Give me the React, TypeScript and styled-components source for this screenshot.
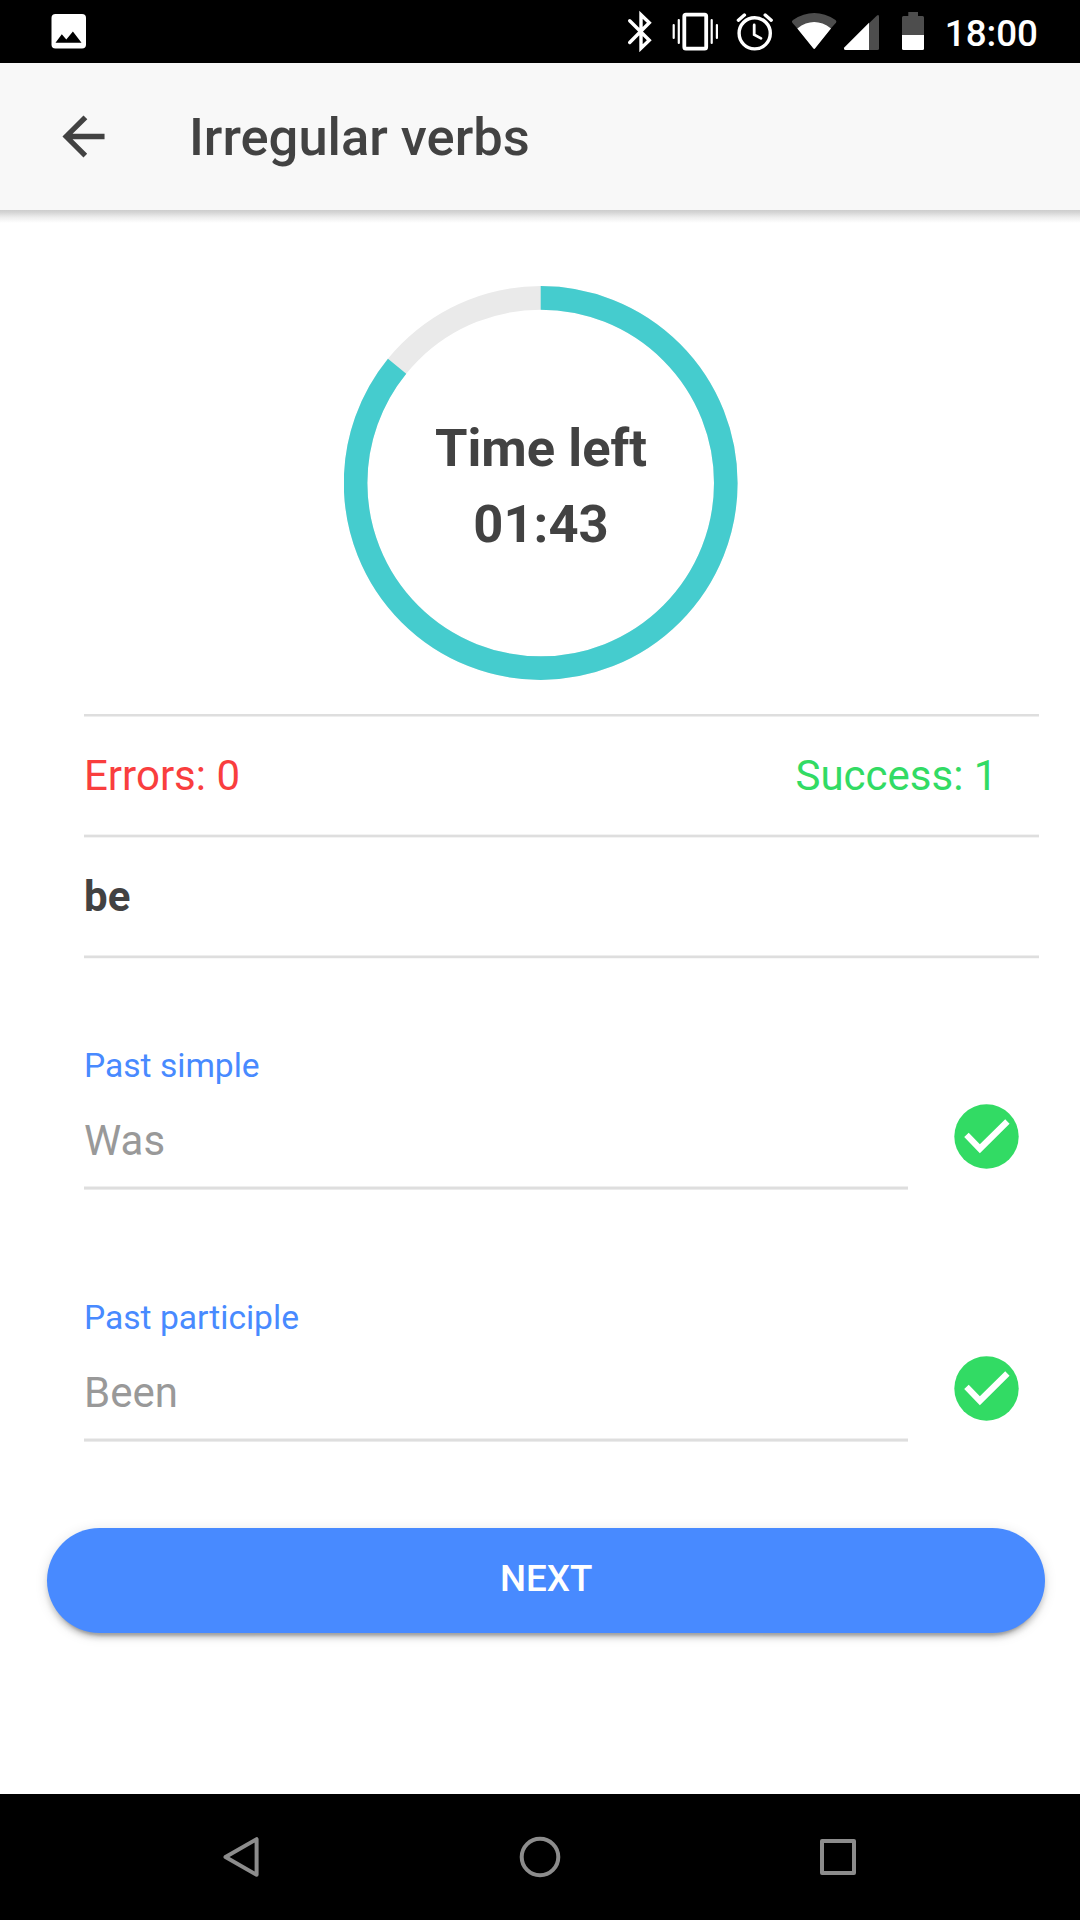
import React from "react";
import styled, { createGlobalStyle } from "styled-components";

const GlobalStyle = createGlobalStyle`
  * { box-sizing: border-box; }
  body {
    margin: 0;
    background: #fff;
    color: #424242;
    font-family: Roboto, "Liberation Sans", sans-serif;
  }
`;

const Screen = styled.div`
  width: 1080px;
  height: 1920px;
  display: flex;
  flex-direction: column;
  overflow: hidden;
  background: #fff;
`;

const StatusBar = styled.div`
  height: 63px;
  flex: none;
  display: flex;
  justify-content: space-between;
  padding: 0 42px 0 50.5px;
  background: #000;
  svg { display: block; flex: none; }
`;

const StatusIcons = styled.div`
  display: flex;
`;

const Clock = styled.div`
  width: 112px;
  text-align: right;
  color: #fff;
  font-size: 36.75px;
  font-weight: 500;
  line-height: 67px;
`;

const Header = styled.header`
  height: 147px;
  flex: none;
  display: flex;
  align-items: center;
  padding-left: 52px;
  background: #f8f8f8;
`;

const BackButton = styled.button`
  width: 63px;
  height: 63px;
  padding: 0;
  border: 0;
  background: none;
  svg { display: block; }
`;

const Title = styled.h1`
  margin: 0 0 0 74px;
  padding-top: 2px;
  font-size: 52.5px;
  font-weight: 500;
  line-height: 63px;
`;

const HeaderShadow = styled.div`
  height: 13px;
  flex: none;
  background: linear-gradient(#cdcdcd, #d6d6d6 20%, #ededed 55%, #fff);
`;

const Content = styled.main`
  flex: 1;
  display: flex;
  flex-direction: column;
`;

const TimerSection = styled.section`
  display: flex;
  justify-content: center;
  padding: 63px 0 33px 1px;
`;

const TimerRing = styled.div`
  display: grid;
  width: 394px;
  height: 394px;
  > * { grid-area: 1 / 1; }
`;

const TimerText = styled.div`
  align-self: center;
  text-align: center;
  font-size: 52.5px;
  font-weight: 700;
  line-height: 76px;
  padding-top: 5px;
  padding-left: 1px;
`;

const List = styled.section`
  padding: 0 40.6px 0 84px;
`;

const Divider = styled.div<{ $top: string; $bottom: string }>`
  height: 4px;
  border-top: 1px solid ${(p) => p.$top};
  border-bottom: 1px solid ${(p) => p.$bottom};
  background: #dedede;
`;

const Row = styled.div`
  height: 117px;
  display: flex;
  align-items: center;
  justify-content: space-between;
  padding-right: 42px;
  font-size: 42px;
  line-height: 50px;
`;

const Score = styled.span<{ $color: string }>`
  color: ${(p) => p.$color};
`;

const Verb = styled.strong`
  font-weight: 700;
`;

const Form = styled.form`
  display: flex;
  flex-direction: column;
  gap: 82px;
  padding: 61px 61.5px 0 84px;
`;

const Field = styled.div`
  height: 170px;
  display: flex;
  justify-content: space-between;
`;

const FieldBody = styled.div`
  width: 824.4px;
  display: flex;
  flex-direction: column;
`;

const Label = styled.label`
  padding-top: 26px;
  height: 91px;
  color: #488aff;
  font-size: 33.6px;
  line-height: 40px;
`;

const Value = styled.div`
  height: 75px;
  color: #999;
  font-size: 42px;
  line-height: 60px;
`;

const Check = styled.svg`
  width: 65px;
  height: 65px;
  margin-top: 83.5px;
  fill: #32db64;
`;

const NextButton = styled.button`
  height: 105px;
  margin: 85.5px 35px 0 47.3px;
  padding: 0 0 4px;
  border: 0;
  border-radius: 52.5px;
  background: #488aff;
  box-shadow: 0 5.25px 5.25px rgba(0, 0, 0, 0.14),
    0 7.9px 2.6px -5.25px rgba(0, 0, 0, 0.2),
    0 2.6px 13.1px rgba(0, 0, 0, 0.12);
  color: #fff;
  font-family: inherit;
  font-size: 36.75px;
  font-weight: 500;
  text-transform: uppercase;
`;

const NavBar = styled.nav`
  height: 126px;
  flex: none;
  display: flex;
  align-items: center;
  justify-content: space-between;
  padding: 0 220px;
  background: #000;
  svg { fill: none; stroke: #8c8c8c; stroke-width: 4; stroke-linejoin: round; }
`;

const RADIUS = 185.1;
const CIRCUMFERENCE = 2 * Math.PI * RADIUS;

function Timer({ left, total }: { left: number; total: number }) {
  const minutes = String(Math.floor(left / 60)).padStart(2, "0");
  const seconds = String(left % 60).padStart(2, "0");
  return (
    <TimerRing>
      <svg width="394" height="394" viewBox="0.3 0 394 394" fill="none" strokeWidth="23.6">
        <circle cx="197" cy="197" r={RADIUS} stroke="#eaeaea" />
        <circle
          cx="197"
          cy="197"
          r={RADIUS}
          stroke="#45ccce"
          strokeDasharray={`${(CIRCUMFERENCE * left) / total} ${CIRCUMFERENCE}`}
          transform="rotate(-90 197 197)"
        />
      </svg>
      <TimerText>
        Time left
        <br />
        {minutes}:{seconds}
      </TimerText>
    </TimerRing>
  );
}

function Answer({ label, value }: { label: string; value: string }) {
  return (
    <Field>
      <FieldBody>
        <Label>{label}</Label>
        <Value>{value}</Value>
        <Divider $top="#efefef" $bottom="#ebebeb" />
      </FieldBody>
      <Check viewBox="46 46 420 420">
        <circle cx="256" cy="256" r="208" />
        <path fill="#fff" d="M213 365L112 260l29-29 72 75 164-161 28 28z" />
      </Check>
    </Field>
  );
}

export default function App() {
  return (
    <>
      <GlobalStyle />
      <Screen>
        <StatusBar>
          <svg width="36" height="63" viewBox="51 0 36 63">
            <rect x="51.5" y="14" width="34.5" height="34.5" rx="4" fill="#fff" />
            <path d="M55.5 42.7L61.8 34.3 66.3 39.6 72.9 31.5 81.5 42.7z" />
          </svg>
          <StatusIcons>
            {/* Bluetooth */}
            <svg width="40" height="63" viewBox="626 0 40 63" fill="none" stroke="#fff" strokeWidth="3.4" strokeLinecap="round">
              <path d="M629.7 20.7L649.3 40.3 641 48.3V14.7L649.3 22.7 629.7 42.5" />
            </svg>
            {/* Vibration mode */}
            <svg width="66" height="63" viewBox="666 0 66 63" fill="none" stroke="#fff">
              <rect x="684.3" y="14.7" width="21.9" height="34" rx="1.6" strokeWidth="3.8" />
              <path strokeWidth="2.2" strokeLinecap="round" d="M673.7 25v13M678.8 20v23M711.7 20v23M716.9 25v13" />
            </svg>
            {/* Alarm */}
            <svg width="54" height="63" viewBox="732 0 54 63" fill="none" stroke="#fff" strokeWidth="3.4">
              <circle cx="754.7" cy="33.3" r="15.6" />
              <path d="M738.4 20.2l6-5.2M771.2 20.2l-6-5.2" strokeLinecap="round" />
              <path d="M754.2 25v9.6l6.8 3.8" strokeWidth="2.8" strokeLinecap="round" />
            </svg>
            {/* Wi-Fi */}
            <svg width="54" height="63" viewBox="786 0 54 63">
              <path fill="#4d4d4d" d="M792.3 22.8Q791.2 21 793 19.9Q814.2 6.2 835.5 19.9Q837 21 836 22.8L830.5 28.8L814.2 48.5L797.6 28.8Z" />
              <path fill="#fff" d="M797.3 28.4Q814.2 15.6 831 28.4L815.2 48.3Q814.2 49.6 813.2 48.3Z" />
            </svg>
            {/* Mobile signal */}
            <svg width="50" height="63" viewBox="840 0 50 63">
              <path fill="#4d4d4d" d="M869 23.2L877 15.4Q879 14.2 879 16.5V48.5Q879 50 877.5 50H869Z" />
              <path fill="#fff" d="M869 22.7V50H845.5Q843 49.5 844.5 47.2Z" />
            </svg>
            {/* Battery */}
            <svg width="36" height="63" viewBox="890 0 36 63">
              <path fill="#4d4d4d" d="M908.3 12H918V16H922.6Q924 16 924 17.5V35H902V17.5Q902 16 903.5 16H908.3Z" />
              <path fill="#fff" d="M902 35H924V48.5Q924 50 922.5 50H903.5Q902 50 902 48.5Z" />
            </svg>
            <Clock>18:00</Clock>
          </StatusIcons>
        </StatusBar>
        <Header>
          <BackButton aria-label="Back">
            <svg width="63" height="63" viewBox="0 0 512 512" fill="#424242">
              <path d="M427 234.625H167.296l119.702-119.702L256 85 85 256l171 171 29.922-29.924-118.626-119.701H427v-42.75z" />
            </svg>
          </BackButton>
          <Title>Irregular verbs</Title>
        </Header>
        <HeaderShadow />
        <Content>
          <TimerSection>
            <Timer left={103} total={120} />
          </TimerSection>
          <List>
            <Divider $top="#fff" $bottom="#eee" />
            <Row>
              <Score $color="#f93e3e">Errors: 0</Score>
              <Score $color="#32db64">Success: 1</Score>
            </Row>
            <Divider $top="#f3f3f3" $bottom="#f3f3f3" />
            <Row>
              <Verb>be</Verb>
            </Row>
            <Divider $top="#eee" $bottom="#f8f8f8" />
          </List>
          <Form>
            <Answer label="Past simple" value="Was" />
            <Answer label="Past participle" value="Been" />
          </Form>
          <NextButton>Next</NextButton>
        </Content>
        <NavBar>
          <svg width="42" height="44" viewBox="220 1835 42 44">
            <path d="M225.5 1857L256.6 1839.2V1874.8Z" />
          </svg>
          <svg width="42" height="44" viewBox="519 1835 42 44">
            <circle cx="540" cy="1857" r="18.3" />
          </svg>
          <svg width="42" height="44" viewBox="818 1835 42 44">
            <rect x="822" y="1841" width="32" height="32" />
          </svg>
        </NavBar>
      </Screen>
    </>
  );
}
